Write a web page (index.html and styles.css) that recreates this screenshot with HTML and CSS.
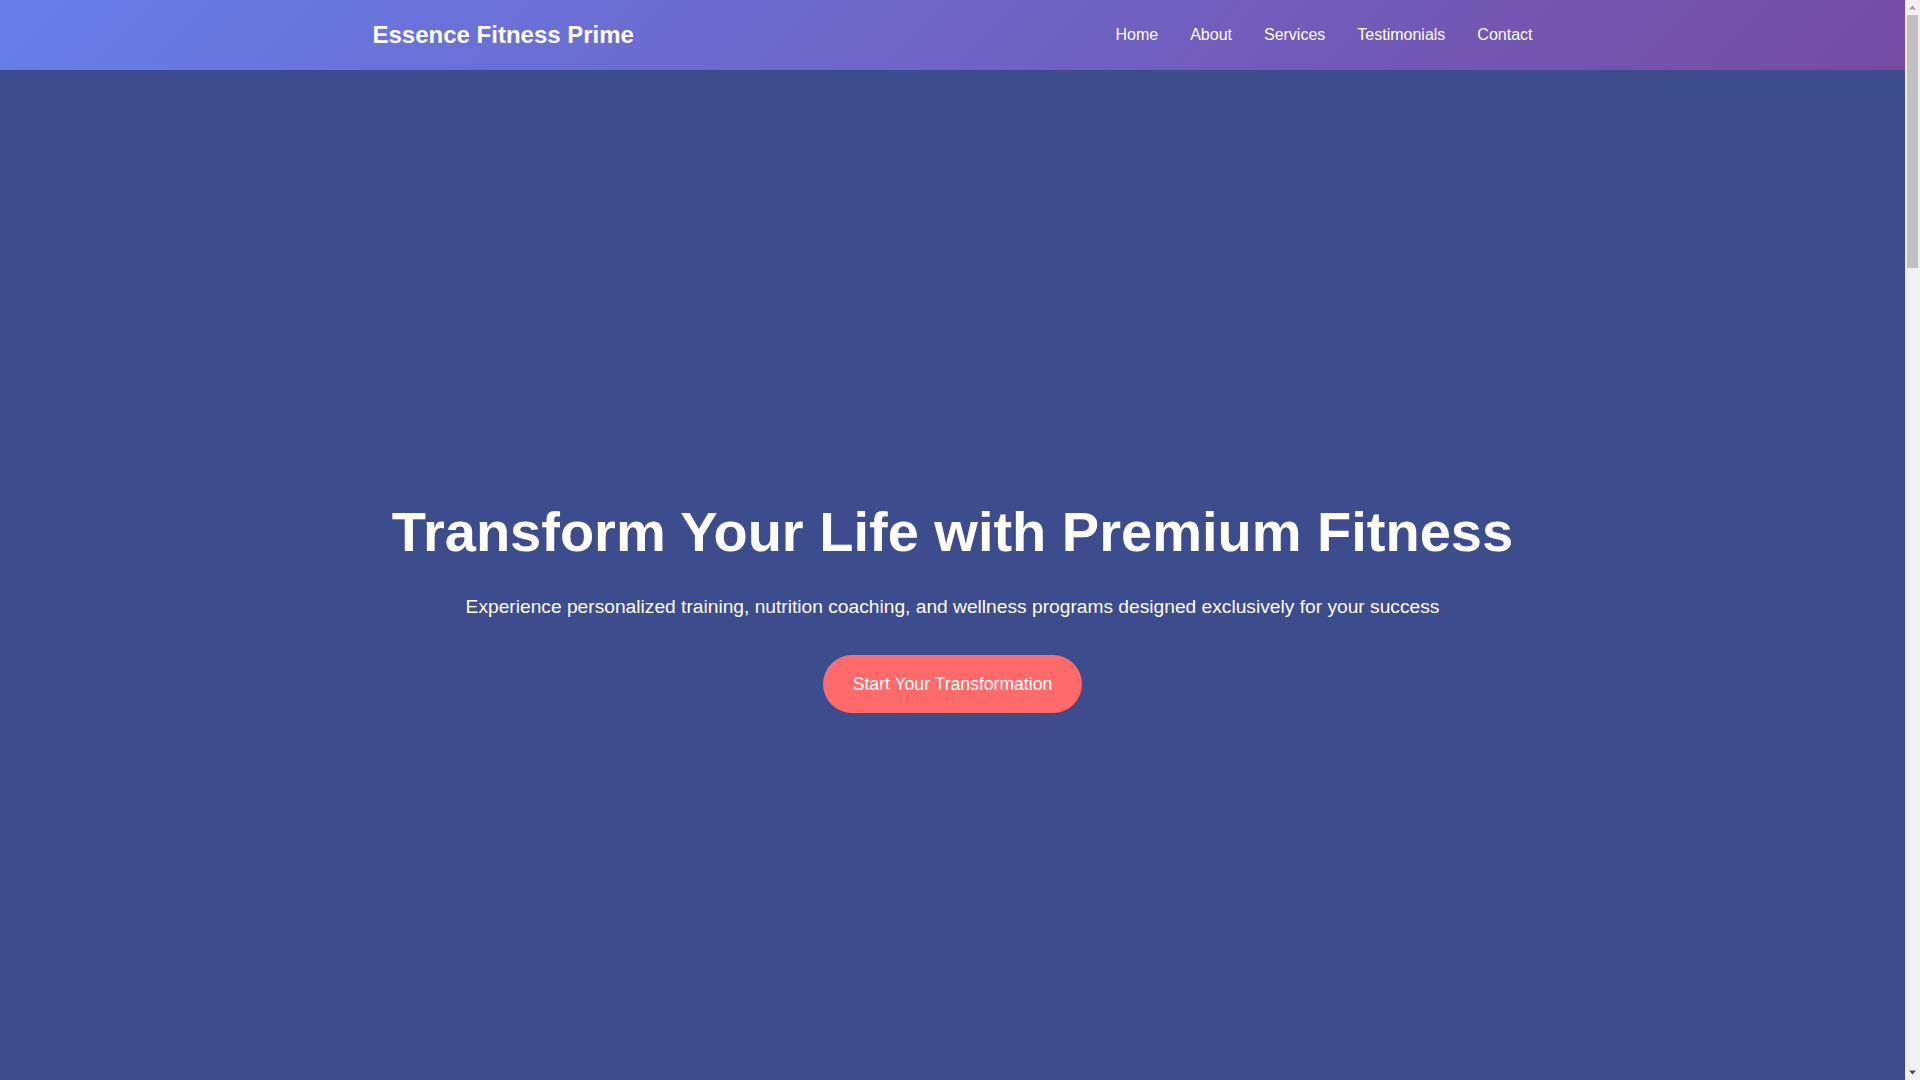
FILE: index.html
```html
<!DOCTYPE html>
<html lang="en">
<head>
<meta charset="UTF-8">
<title>Essence Fitness Prime</title>
<link rel="stylesheet" href="styles.css">
</head>
<body>
<div class="frame">
  <div class="page">
    <header class="site-header">
      <div class="container nav-bar">
        <div class="logo">Essence Fitness Prime</div>
        <nav class="nav-links">
          <a href="#home">Home</a>
          <a href="#about">About</a>
          <a href="#services">Services</a>
          <a href="#testimonials">Testimonials</a>
          <a href="#contact">Contact</a>
        </nav>
      </div>
    </header>

    <section class="hero" id="home">
      <div class="hero-content">
        <h1>Transform Your Life with Premium Fitness</h1>
        <p>Experience personalized training, nutrition coaching, and wellness programs designed exclusively for your success</p>
        <a href="#contact" class="cta-button">Start Your Transformation</a>
      </div>
    </section>
  </div>

  <div class="scrollbar" aria-hidden="true">
    <div class="sb-arrow">
      <svg width="15" height="15" viewBox="0 0 15 15"><polygon points="4,9.5 11,9.5 7.5,5.5" fill="#a3a3a3"/></svg>
    </div>
    <div class="sb-track">
      <div class="sb-thumb"></div>
    </div>
    <div class="sb-arrow">
      <svg width="15" height="15" viewBox="0 0 15 15"><polygon points="4,5.5 11,5.5 7.5,9.5" fill="#505050"/></svg>
    </div>
  </div>
</div>
</body>
</html>
```

FILE: styles.css
```css
* {
  margin: 0;
  padding: 0;
  box-sizing: border-box;
}

html, body {
  height: 100%;
  overflow: hidden;
}

body {
  font-family: "Liberation Sans", Arial, sans-serif;
  line-height: 1.6;
  color: #333;
  background: #fff;
}

.frame {
  display: flex;
  height: 100vh;
}

.page {
  flex: 1;
  min-width: 0;
  overflow: hidden;
}

.container {
  max-width: 1200px;
  margin: 0 auto;
  padding: 0 20px;
}

.site-header {
  background: linear-gradient(135deg, #667eea 0%, #764ba2 100%);
  color: #fff;
  padding: 16px 0;
}

.nav-bar {
  display: flex;
  justify-content: space-between;
  align-items: center;
}

.logo {
  font-size: 24px;
  font-weight: bold;
}

.nav-links {
  display: flex;
  gap: 32px;
}

.nav-links a {
  color: #fff;
  text-decoration: none;
  font-size: 16px;
}

.hero {
  min-height: 100vh;
  background: #3d4c8c;
  color: #fff;
  display: flex;
  align-items: center;
  justify-content: center;
  text-align: center;
  padding: 0 20px 10px;
}

.hero h1 {
  font-size: 56px;
  line-height: 1.2;
  margin-bottom: 27px;
}

.hero p {
  font-size: 19.2px;
  margin-bottom: 32px;
}

.cta-button {
  display: inline-block;
  background: #ff6b6b;
  color: #fff;
  text-decoration: none;
  font-size: 17.6px;
  padding: 15px 30px;
  border-radius: 50px;
}

/* browser-style vertical scrollbar */
.scrollbar {
  width: 15px;
  flex: none;
  display: flex;
  flex-direction: column;
  background: #f1f1f1;
}

.sb-arrow {
  height: 15px;
  flex: none;
  display: flex;
}

.sb-track {
  flex: 1;
  padding: 0 2px;
}

.sb-thumb {
  height: 253px;
  background: #c1c1c1;
}
```
